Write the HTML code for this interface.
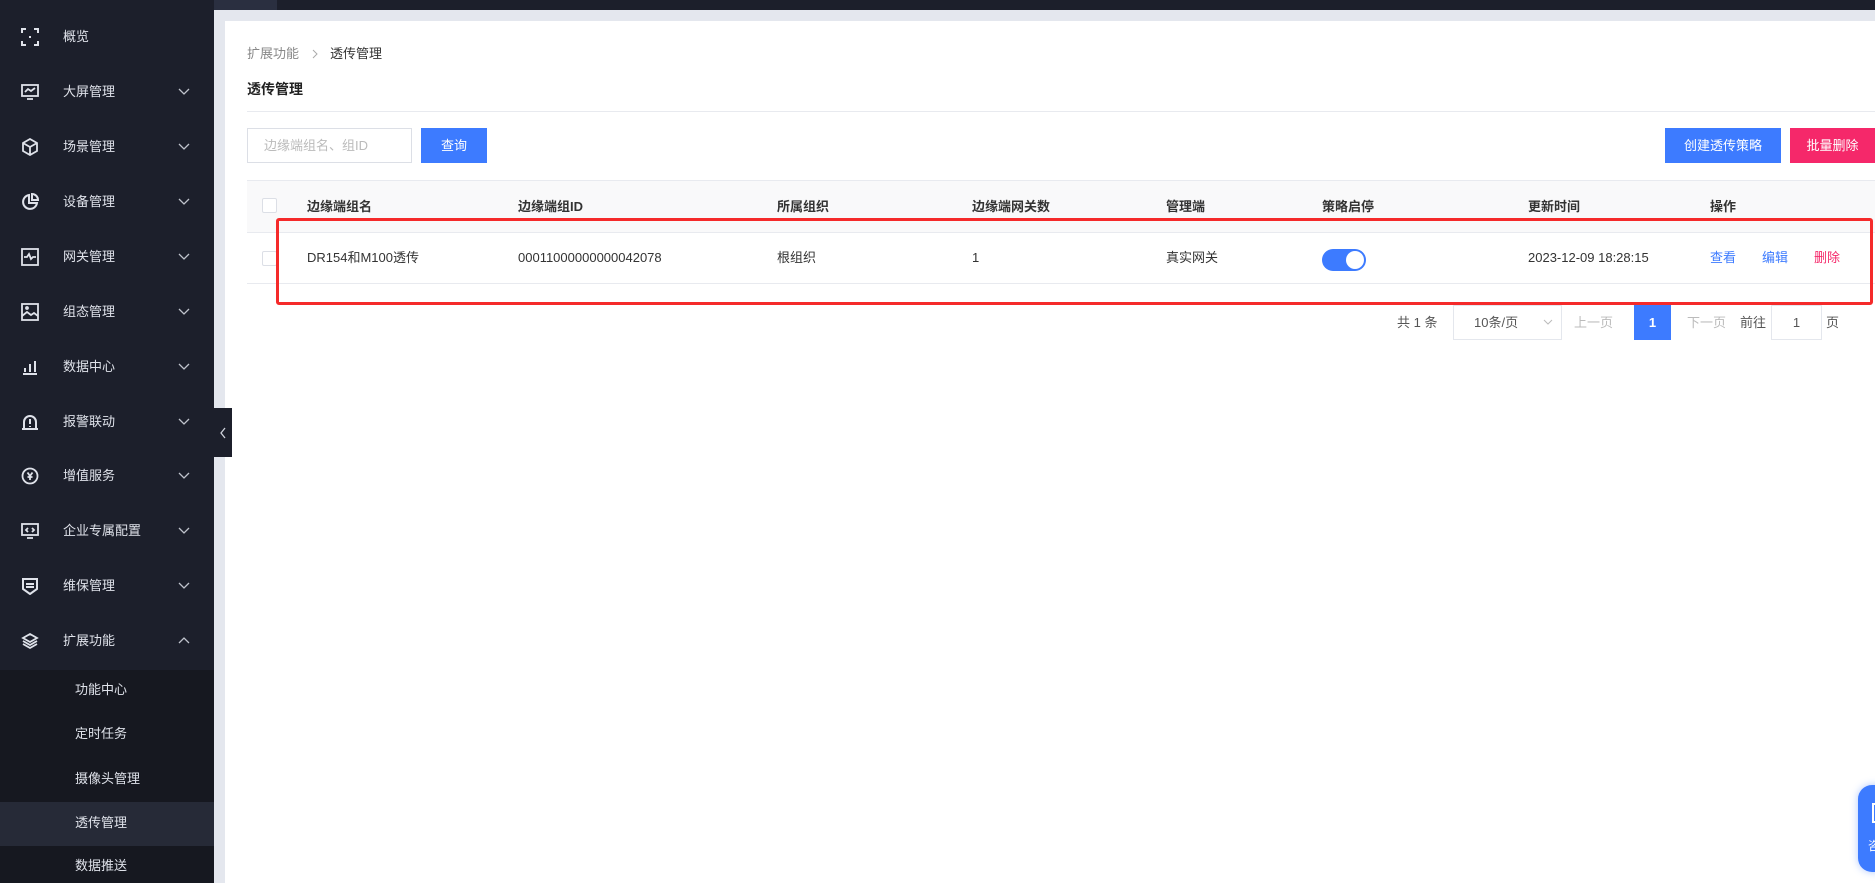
<!DOCTYPE html>
<html><head><meta charset="utf-8">
<style>
*{margin:0;padding:0;box-sizing:border-box}
body{width:1875px;height:883px;overflow:hidden;background:#e4e7ee;font-family:"Liberation Sans","Noto Sans CJK SC",sans-serif;font-size:13px;color:#333;position:relative}
.abs{position:absolute}
#side{left:0;top:0;width:214px;height:883px;background:#1c1f2b}
.it{position:absolute;left:0;width:214px;height:40px;color:#dfe2ea;font-size:13px}
.it .ic{position:absolute;left:21px;top:11px;width:18px;height:18px}
.it .tx{position:absolute;left:63px;top:11px;line-height:18px}
.it .ch{position:absolute;left:178px;top:11px;width:12px;height:18px}
#sub{left:0;top:670px;width:214px;height:213px;background:#161820}
.si{position:absolute;left:75px;color:#dfe2ea;font-size:13px;line-height:18px}
#top{left:214px;top:0;width:1661px;height:10px;background:#1c1f2b}
#panel{left:225px;top:21px;width:1650px;height:862px;background:#fff}
.th{position:absolute;top:198px;font-weight:bold;color:#333;line-height:18px}
.td{position:absolute;top:249px;color:#333;line-height:18px}
.cb{position:absolute;left:262px;width:15px;height:15px;border:1px solid #dcdfe6;border-radius:2px;background:#fff}
</style></head><body>
<div id="side" class="abs">
 <div class="it" style="top:17px"><svg class="ic" viewBox="0 0 18 18" fill="none" stroke="#dfe2ea" stroke-width="2"><path d="M1 5V1h4M13 1h4v4M17 13v4h-4M5 17H1v-4"/><rect x="8" y="8" width="2" height="2" fill="#dfe2ea" stroke="none"/></svg><span class="tx">概览</span></div>
 <div class="it" style="top:72px"><svg class="ic" viewBox="0 0 18 18" fill="none" stroke="#dfe2ea" stroke-width="1.8"><rect x="1" y="2" width="16" height="11"/><path d="M4 9l3-3 3 2 4-3M6 16h6"/></svg><span class="tx">大屏管理</span><svg class="ch" viewBox="0 0 12 18" fill="none" stroke="#bfc3cc" stroke-width="1.3"><path d="M1 6l5 5 5-5"/></svg></div>
 <div class="it" style="top:127px"><svg class="ic" viewBox="0 0 18 18" fill="none" stroke="#dfe2ea" stroke-width="1.8"><path d="M9 1l7 4v8l-7 4-7-4V5zM2 5l7 4 7-4M9 9v8"/></svg><span class="tx">场景管理</span><svg class="ch" viewBox="0 0 12 18" fill="none" stroke="#bfc3cc" stroke-width="1.3"><path d="M1 6l5 5 5-5"/></svg></div>
 <div class="it" style="top:182px"><svg class="ic" viewBox="0 0 18 18" fill="none" stroke="#dfe2ea" stroke-width="2"><path d="M8 2a7 7 0 1 0 8 8H8zM11 1v6h6a6 6 0 0 0-6-6z"/></svg><span class="tx">设备管理</span><svg class="ch" viewBox="0 0 12 18" fill="none" stroke="#bfc3cc" stroke-width="1.3"><path d="M1 6l5 5 5-5"/></svg></div>
 <div class="it" style="top:237px"><svg class="ic" viewBox="0 0 18 18" fill="none" stroke="#dfe2ea" stroke-width="1.8"><rect x="1" y="1" width="16" height="16"/><path d="M3 9h3l2-3 2 5 2-2h3"/></svg><span class="tx">网关管理</span><svg class="ch" viewBox="0 0 12 18" fill="none" stroke="#bfc3cc" stroke-width="1.3"><path d="M1 6l5 5 5-5"/></svg></div>
 <div class="it" style="top:292px"><svg class="ic" viewBox="0 0 18 18" fill="none" stroke="#dfe2ea" stroke-width="1.8"><rect x="1" y="1" width="16" height="16"/><path d="M1 13l5-4 4 3 3-2 4 3"/><circle cx="6" cy="5" r="1"/></svg><span class="tx">组态管理</span><svg class="ch" viewBox="0 0 12 18" fill="none" stroke="#bfc3cc" stroke-width="1.3"><path d="M1 6l5 5 5-5"/></svg></div>
 <div class="it" style="top:347px"><svg class="ic" viewBox="0 0 18 18" fill="none" stroke="#dfe2ea" stroke-width="2"><path d="M2 16h14M4 10v4M9 6v8M14 3v11"/></svg><span class="tx">数据中心</span><svg class="ch" viewBox="0 0 12 18" fill="none" stroke="#bfc3cc" stroke-width="1.3"><path d="M1 6l5 5 5-5"/></svg></div>
 <div class="it" style="top:402px"><svg class="ic" viewBox="0 0 18 18" fill="none" stroke="#dfe2ea" stroke-width="2"><path d="M3 16V9a6 6 0 0 1 12 0v7M1 16h16M9 6v5M9 13v1"/></svg><span class="tx">报警联动</span><svg class="ch" viewBox="0 0 12 18" fill="none" stroke="#bfc3cc" stroke-width="1.3"><path d="M1 6l5 5 5-5"/></svg></div>
 <div class="it" style="top:456px"><svg class="ic" viewBox="0 0 18 18" fill="none" stroke="#dfe2ea" stroke-width="1.8"><circle cx="9" cy="9" r="7.5"/><path d="M6.5 5.5L9 9l2.5-3.5M9 9v4M6.5 10h5"/></svg><span class="tx">增值服务</span><svg class="ch" viewBox="0 0 12 18" fill="none" stroke="#bfc3cc" stroke-width="1.3"><path d="M1 6l5 5 5-5"/></svg></div>
 <div class="it" style="top:511px"><svg class="ic" viewBox="0 0 18 18" fill="none" stroke="#dfe2ea" stroke-width="1.8"><rect x="1" y="2" width="16" height="11"/><path d="M6 16h6M7 6l-2 2 2 2M11 6l2 2-2 2"/></svg><span class="tx">企业专属配置</span><svg class="ch" viewBox="0 0 12 18" fill="none" stroke="#bfc3cc" stroke-width="1.3"><path d="M1 6l5 5 5-5"/></svg></div>
 <div class="it" style="top:566px"><svg class="ic" viewBox="0 0 18 18" fill="none" stroke="#dfe2ea" stroke-width="2"><path d="M2 2h14v10l-7 5-7-5zM5 7h8M5 10h8"/></svg><span class="tx">维保管理</span><svg class="ch" viewBox="0 0 12 18" fill="none" stroke="#bfc3cc" stroke-width="1.3"><path d="M1 6l5 5 5-5"/></svg></div>
 <div class="it" style="top:621px"><svg class="ic" viewBox="0 0 18 18" fill="none" stroke="#dfe2ea" stroke-width="1.8"><path d="M9 2l7 4-7 4-7-4zM2 9l7 4 7-4M2 12l7 4 7-4"/></svg><span class="tx">扩展功能</span><svg class="ch" viewBox="0 0 12 18" fill="none" stroke="#bfc3cc" stroke-width="1.3"><path d="M1 11l5-5 5 5"/></svg></div>
</div>
<div id="sub" class="abs">
 <div class="abs" style="left:0;top:132px;width:214px;height:44px;background:#262a37"></div>
 <div class="si" style="top:11px">功能中心</div>
 <div class="si" style="top:55px">定时任务</div>
 <div class="si" style="top:100px">摄像头管理</div>
 <div class="si" style="top:144px">透传管理</div>
 <div class="si" style="top:187px">数据推送</div>
</div>
<div id="top" class="abs"><div class="abs" style="left:0;top:0;width:63px;height:10px;background:#2a2f40"></div></div>
<div id="panel" class="abs"></div>
<div class="abs" style="left:214px;top:408px;width:18px;height:49px;background:#1c1f2b;z-index:5"><svg class="abs" style="left:4px;top:18px" width="10" height="14" viewBox="0 0 10 14" fill="none" stroke="#cfd3dc" stroke-width="1.3"><path d="M7 2L3 7l4 5"/></svg></div>
<div class="abs" style="left:247px;top:45px;color:#888;line-height:18px">扩展功能</div>
<svg class="abs" style="left:311px;top:48px" width="8" height="12" viewBox="0 0 8 12" fill="none" stroke="#aaa" stroke-width="1"><path d="M2 2l4 4-4 4"/></svg>
<div class="abs" style="left:330px;top:45px;color:#333;line-height:18px">透传管理</div>
<div class="abs" style="left:247px;top:80px;font-size:14px;font-weight:bold;color:#222;line-height:18px">透传管理</div>
<div class="abs" style="left:247px;top:111px;width:1628px;height:1px;background:#e8eaef"></div>
<div class="abs" style="left:247px;top:128px;width:165px;height:35px;border:1px solid #dcdfe6;color:#bbb;padding-left:16px;line-height:33px">边缘端组名、组ID</div>
<div class="abs" style="left:421px;top:128px;width:66px;height:35px;background:#3d7bff;color:#fff;text-align:center;line-height:35px">查询</div>
<div class="abs" style="left:1665px;top:128px;width:116px;height:35px;background:#3d7bff;color:#fff;text-align:center;line-height:35px">创建透传策略</div>
<div class="abs" style="left:1790px;top:128px;width:85px;height:35px;background:#f5286a;color:#fff;text-align:center;line-height:35px">批量删除</div>
<div class="abs" style="left:247px;top:180px;width:1628px;height:53px;background:#f9f9fa;border-top:1px solid #e8eaef;border-bottom:1px solid #e8eaef"></div>
<div class="cb" style="top:198px"></div>
<div class="th" style="left:307px">边缘端组名</div>
<div class="th" style="left:518px">边缘端组ID</div>
<div class="th" style="left:777px">所属组织</div>
<div class="th" style="left:972px">边缘端网关数</div>
<div class="th" style="left:1166px">管理端</div>
<div class="th" style="left:1322px">策略启停</div>
<div class="th" style="left:1528px">更新时间</div>
<div class="th" style="left:1710px">操作</div>
<div class="abs" style="left:247px;top:283px;width:1628px;height:1px;background:#e8eaef"></div>
<div class="cb" style="top:251px"></div>
<div class="td" style="left:307px">DR154和M100透传</div>
<div class="td" style="left:518px">00011000000000042078</div>
<div class="td" style="left:777px">根组织</div>
<div class="td" style="left:972px">1</div>
<div class="td" style="left:1166px">真实网关</div>
<div class="abs" style="left:1322px;top:249px;width:44px;height:22px;border-radius:11px;background:#3d7bff"><div class="abs" style="left:24px;top:2px;width:18px;height:18px;border-radius:9px;background:#fff"></div></div>
<div class="td" style="left:1528px">2023-12-09 18:28:15</div>
<div class="td" style="left:1710px;color:#3d7bff">查看</div>
<div class="td" style="left:1762px;color:#3d7bff">编辑</div>
<div class="td" style="left:1814px;color:#f5286a">删除</div>
<div class="abs" style="left:276px;top:218px;width:1597px;height:87px;border:3px solid #f52a2a;border-radius:3px"></div>
<div class="abs" style="left:1397px;top:314px;color:#555;line-height:18px">共 1 条</div>
<div class="abs" style="left:1453px;top:305px;width:109px;height:35px;border:1px solid #e4e7ed;color:#555;padding-left:20px;line-height:33px">10条/页</div>
<svg class="abs" style="left:1543px;top:318px" width="10" height="8" viewBox="0 0 10 8" fill="none" stroke="#bbb" stroke-width="1"><path d="M1 2l4 4 4-4"/></svg>
<div class="abs" style="left:1574px;top:314px;color:#bbb;line-height:18px">上一页</div>
<div class="abs" style="left:1634px;top:305px;width:37px;height:35px;background:#3d7bff;color:#fff;text-align:center;line-height:35px;font-weight:bold">1</div>
<div class="abs" style="left:1687px;top:314px;color:#bbb;line-height:18px">下一页</div>
<div class="abs" style="left:1740px;top:314px;color:#555;line-height:18px">前往</div>
<div class="abs" style="left:1771px;top:305px;width:51px;height:35px;border:1px solid #e4e7ed;color:#555;text-align:center;line-height:33px">1</div>
<div class="abs" style="left:1826px;top:314px;color:#555;line-height:18px">页</div>
<div class="abs" style="left:1858px;top:785px;width:40px;height:87px;border-radius:14px;background:#3d7bff;box-shadow:0 0 8px rgba(61,123,255,.4)"><div class="abs" style="left:14px;top:18px;width:12px;height:20px;border:2px solid #fff"></div><div class="abs" style="left:10px;top:52px;color:#fff;font-size:12px">咨</div></div>
</body></html>
